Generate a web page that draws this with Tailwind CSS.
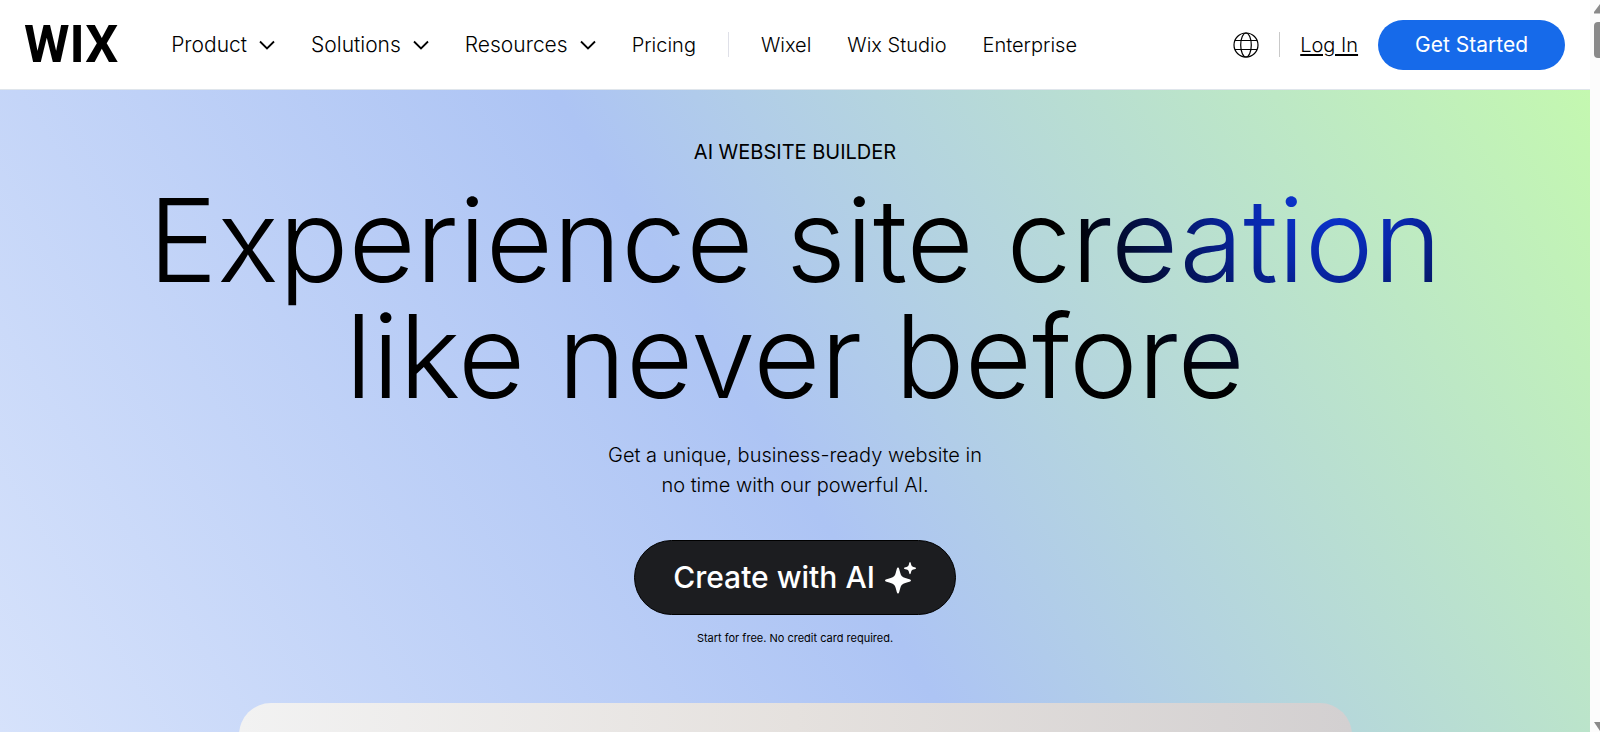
<!DOCTYPE html>
<html lang="en">
<head>
    <meta charset="UTF-8">
    <meta name="viewport" content="width=device-width, initial-scale=1.0">
    <title>Wix</title>
    <script src="https://cdn.jsdelivr.net/npm/@tailwindcss/browser@4"></script>
</head>
<body class="h-screen flex overflow-hidden bg-white text-black font-['Inter',sans-serif]">

  <div class="flex-1 min-w-0 flex flex-col">

    <!-- Header -->
    <header class="h-[90px] shrink-0 flex items-center pl-6 pr-[25px] border-b border-[#dfe5eb]">
      <a href="#" class="font-['Roboto',sans-serif] font-bold text-[52px] leading-none">WIX</a>

      <nav class="flex items-center gap-9 ml-[53px] font-light whitespace-nowrap">
        <div class="flex items-center gap-9 text-[21px]">
          <button type="button" class="flex items-center gap-3">Product
            <svg class="w-4 h-4" viewBox="0 0 16 16" fill="none" stroke="currentColor" stroke-width="1.8"><path d="M1 4.500l7 7 7-7"/></svg>
          </button>
          <button type="button" class="flex items-center gap-3">Solutions
            <svg class="w-4 h-4" viewBox="0 0 16 16" fill="none" stroke="currentColor" stroke-width="1.8"><path d="M1 4.500l7 7 7-7"/></svg>
          </button>
          <button type="button" class="flex items-center gap-3">Resources
            <svg class="w-4 h-4" viewBox="0 0 16 16" fill="none" stroke="currentColor" stroke-width="1.8"><path d="M1 4.500l7 7 7-7"/></svg>
          </button>
        </div>
        <div class="flex items-center gap-8 text-xl">
          <a href="#">Pricing</a>
          <span class="w-px h-[25px] bg-[#dfe0e8]"></span>
          <a href="#">Wixel</a>
        </div>
        <a href="#" class="text-xl">Wix Studio</a>
        <a href="#" class="text-xl">Enterprise</a>
      </nav>

      <div class="flex items-center gap-5 ml-auto text-xl whitespace-nowrap">
        <button type="button" aria-label="Language">
          <svg class="w-[26px] h-[26px]" viewBox="0 0 26 26" fill="none" stroke="currentColor" stroke-width="1.2">
            <circle cx="13" cy="13" r="12"/>
            <ellipse cx="13" cy="13" rx="5.3" ry="12"/>
            <path d="M2 8.500h22M2 17.500h22"/>
          </svg>
        </button>
        <span class="w-px h-[25px] bg-[#c9c9c9]"></span>
        <a href="#" class="font-light underline underline-offset-2">Log In</a>
        <a href="#" class="h-[50px] px-[37px] flex items-center rounded-full bg-[#166aea] text-white text-[21px]">Get Started</a>
      </div>
    </header>

    <!-- Hero -->
    <main class="flex-1 min-h-0 overflow-hidden flex flex-col items-center pt-[47px] text-center bg-[linear-gradient(58deg,#d6e2fb_0%,#adc4f4_48%,#c4f8b0_100%)]">
      <p class="text-xl leading-[30px]">AI WEBSITE BUILDER</p>
      <h1 class="mt-[15px] px-4 text-[116px] leading-[116px] font-light text-transparent bg-clip-text bg-[radial-gradient(260px_210px_at_90%_5%,#0c38d8_0%,#0826a8_35%,#000_100%)]">Experience site creation<br>like never before</h1>
      <p class="mt-[26px] text-xl leading-[30px] font-light">Get a unique, business-ready website in<br>no time with our powerful AI.</p>
      <a href="#" class="mt-10 h-[75px] shrink-0 px-[38px] flex items-center gap-[10px] rounded-full bg-[#1c1d20] border border-black text-white text-[30px] font-medium">Create with AI
        <svg class="w-8 h-8" viewBox="0 0 32 32" fill="currentColor">
          <path d="M13 5.500c1.200 0 1.300 2 2.300 5.500 .8 3 2 4.200 5 5 3.600 1 5.700 1.300 5.700 2.500s-2.100 1.500-5.700 2.500c-3 .8-4.200 2-5 5-1 3.500-1.100 5.500-2.300 5.500s-1.300-2-2.300-5.500c-.8-3-2-4.200-5-5C2.100 20 0 19.700 0 18.500S2.100 17 5.700 16c3-.8 4.200-2 5-5 1-3.500 1.100-5.500 2.300-5.500z"/>
          <path d="M25 0c.6 0 .7 1 1.200 2.700.4 1.300.9 1.800 2.200 2.200C30.100 5.400 31 5.500 31 6.200s-.9.800-2.600 1.200c-1.300.4-1.800.9-2.200 2.200-.5 1.700-.6 2.700-1.200 2.700s-.7-1-1.200-2.700c-.4-1.300-.9-1.800-2.200-2.200C19.900 7 19 6.900 19 6.200s.9-.8 2.600-1.300c1.300-.4 1.800-.9 2.200-2.200C24.300 1 24.400 0 25 0z"/>
        </svg>
      </a>
      <p class="mt-[14px] text-[11px] leading-[18px]">Start for free. No credit card required.</p>
      <div class="mt-14 w-[70%] h-[400px] shrink-0 rounded-[32px] bg-linear-to-r from-[#f2f2f2] via-[#e5e1de] to-[#d3d0d1]"></div>
    </main>
  </div>

  <!-- Scrollbar -->
  <aside class="w-[10px] shrink-0 flex flex-col items-end bg-[#fcfcfc] pt-1 overflow-hidden">
    <svg class="w-[6px] h-[10px]" viewBox="0 0 6 10" fill="#8a8a8a"><path d="M6 0L0 8v1.500h6z"/></svg>
    <span class="mt-2 w-[6px] h-9 rounded-l bg-[#8a8a8a]"></span>
    <svg class="mt-auto w-[6px] h-[10px]" viewBox="0 0 6 10" fill="#8a8a8a"><path d="M0 0h6v9z"/></svg>
  </aside>

</body>
</html>
